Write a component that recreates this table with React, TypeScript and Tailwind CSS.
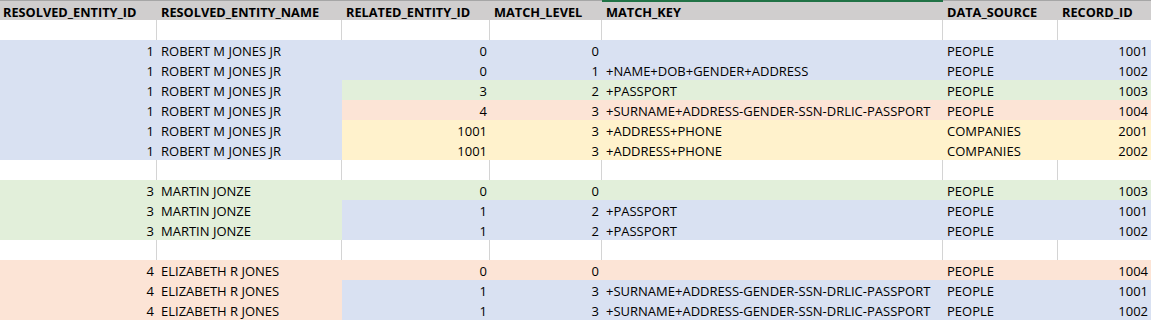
const BLUE = "bg-[#d9e1f2]";
const GREEN = "bg-[#e2efda]";
const PEACH = "bg-[#fce4d6]";
const YELLOW = "bg-[#fff2cc]";

type Row = {
  id: string;
  name: string;
  rel: string;
  level: string;
  key: string;
  source: string;
  record: string;
  left: string;
  right: string;
};

const groups: Row[][] = [
  [
    { id: "1", name: "ROBERT M JONES JR", rel: "0", level: "0", key: "", source: "PEOPLE", record: "1001", left: BLUE, right: BLUE },
    { id: "1", name: "ROBERT M JONES JR", rel: "0", level: "1", key: "+NAME+DOB+GENDER+ADDRESS", source: "PEOPLE", record: "1002", left: BLUE, right: BLUE },
    { id: "1", name: "ROBERT M JONES JR", rel: "3", level: "2", key: "+PASSPORT", source: "PEOPLE", record: "1003", left: BLUE, right: GREEN },
    { id: "1", name: "ROBERT M JONES JR", rel: "4", level: "3", key: "+SURNAME+ADDRESS-GENDER-SSN-DRLIC-PASSPORT", source: "PEOPLE", record: "1004", left: BLUE, right: PEACH },
    { id: "1", name: "ROBERT M JONES JR", rel: "1001", level: "3", key: "+ADDRESS+PHONE", source: "COMPANIES", record: "2001", left: BLUE, right: YELLOW },
    { id: "1", name: "ROBERT M JONES JR", rel: "1001", level: "3", key: "+ADDRESS+PHONE", source: "COMPANIES", record: "2002", left: BLUE, right: YELLOW },
  ],
  [
    { id: "3", name: "MARTIN JONZE", rel: "0", level: "0", key: "", source: "PEOPLE", record: "1003", left: GREEN, right: GREEN },
    { id: "3", name: "MARTIN JONZE", rel: "1", level: "2", key: "+PASSPORT", source: "PEOPLE", record: "1001", left: GREEN, right: BLUE },
    { id: "3", name: "MARTIN JONZE", rel: "1", level: "2", key: "+PASSPORT", source: "PEOPLE", record: "1002", left: GREEN, right: BLUE },
  ],
  [
    { id: "4", name: "ELIZABETH R JONES", rel: "0", level: "0", key: "", source: "PEOPLE", record: "1004", left: PEACH, right: PEACH },
    { id: "4", name: "ELIZABETH R JONES", rel: "1", level: "3", key: "+SURNAME+ADDRESS-GENDER-SSN-DRLIC-PASSPORT", source: "PEOPLE", record: "1001", left: PEACH, right: BLUE },
    { id: "4", name: "ELIZABETH R JONES", rel: "1", level: "3", key: "+SURNAME+ADDRESS-GENDER-SSN-DRLIC-PASSPORT", source: "PEOPLE", record: "1002", left: PEACH, right: BLUE },
  ],
];

const headers = [
  "RESOLVED_ENTITY_ID",
  "RESOLVED_ENTITY_NAME",
  "RELATED_ENTITY_ID",
  "MATCH_LEVEL",
  "MATCH_KEY",
  "DATA_SOURCE",
  "RECORD_ID",
];

const cols = "grid grid-cols-[157px_185px_148px_112px_341px_115px_93px]";

function BlankRow() {
  return (
    <div className={`${cols} h-5`}>
      {headers.map((h, i) => (
        <div key={h} className={i < 6 ? "border-r border-[#d4d4d4]" : ""} />
      ))}
    </div>
  );
}

function DataRow({ r }: { r: Row }) {
  return (
    <div className={`${cols} h-5 items-stretch`}>
      <div className={`${r.left} flex items-center justify-end pr-[3px] pt-[3px]`}>{r.id}</div>
      <div className={`${r.left} flex items-center pl-1 pt-[3px]`}>{r.name}</div>
      <div className={`${r.right} flex items-center justify-end pr-[3px] pt-[3px]`}>{r.rel}</div>
      <div className={`${r.right} flex items-center justify-end pr-[3px] pt-[3px]`}>{r.level}</div>
      <div className={`${r.right} flex items-center pl-1 pt-[3px]`}>{r.key}</div>
      <div className={`${r.right} flex items-center pl-1 pt-[3px]`}>{r.source}</div>
      <div className={`${r.right} flex items-center justify-end pr-[3px] pt-[3px]`}>{r.record}</div>
    </div>
  );
}

export default function App() {
  return (
    <div className="w-[1151px] h-[322px] bg-white overflow-hidden text-[13px] text-black font-['Open_Sans',sans-serif] leading-none">
      <div className={`${cols} h-5 bg-[#d0cece] font-bold text-[12.75px]`}>
        {headers.map((h, i) => (
          <div
            key={h}
            className={`flex items-center pt-[3px] ${
              i === 4 ? "border-t-2 border-[#217346]" : "border-t border-[#a6a6a6]"
            } ${i === 0 ? "pl-[3px]" : "pl-1"}`}
          >
            {h}
          </div>
        ))}
      </div>
      <BlankRow />
      {groups.map((g, gi) => (
        <div key={gi}>
          {g.map((r, ri) => (
            <DataRow key={ri} r={r} />
          ))}
          {gi < groups.length - 1 && <BlankRow />}
        </div>
      ))}
    </div>
  );
}
